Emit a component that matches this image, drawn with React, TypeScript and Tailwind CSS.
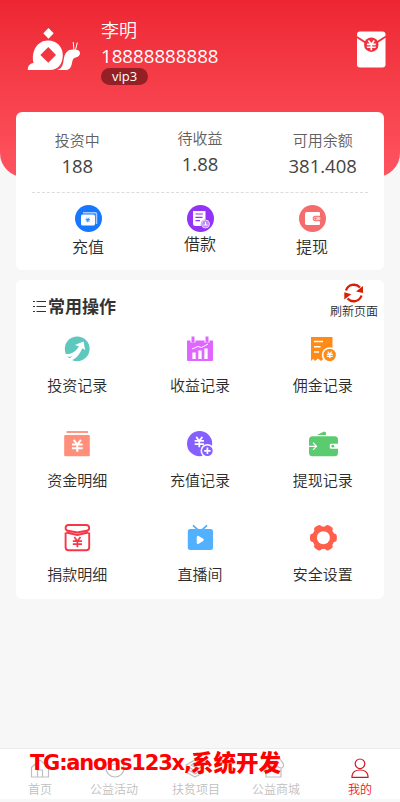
import type { ReactNode } from "react";

type Item = {
  label: string;
  icon: ReactNode;
};

function Yen({ x, y, s = 1 }: { x: number; y: number; s?: number }) {
  return (
    <path
      transform={`translate(${x} ${y}) scale(${s})`}
      d="M-3-5 0-1 3-5M-4.5-1h9M-4.5 2h9M0-1v6"
      fill="none"
      stroke="currentColor"
      strokeWidth="1.7"
    />
  );
}

function Snail() {
  return (
    <svg width="54" height="44" viewBox="27 27 54 44" fill="#fff">
      <path d="m48.500 28 5.200 5.300-5.200 5.400-5.200-5.400z" />
      <path
        fillRule="evenodd"
        d="M27.800 70c0-4.200 1.800-6.300 5.700-7C31 51.500 37 40.500 48 40.500c9 0 14.800 6.500 14.800 14.500 0 8.500-4.300 15-12.800 15zM48.300 47l-7.900 8 7.900 7.700 7.700-7.700z"
      />
      <path d="M57 70c5.500-1.500 6-5.500 6.700-10.500 1-7 4-10 9.300-10 4.500 0 7 1 7 3.500 0 2.900-2.300 4-5 4.800-2.300.7-2.500 2.700-3 5.200-.9 4.500-2.500 7-6.500 7z" />
      <path d="m74 50-.8-8M75.500 50l1.800-7.500" stroke="#fff" strokeWidth="1" />
    </svg>
  );
}

function RedEnvelope() {
  return (
    <svg width="30" height="38" viewBox="0 0 30 38" className="text-white">
      <rect x="1" y=".5" width="28.500" height="36" rx="3" fill="#fff" />
      <path d="m0 5.500 9.500 6h11L30 5.500" fill="none" stroke="#f2303d" strokeWidth="1.900" />
      <circle cx="15.300" cy="13.700" r="7.200" fill="#f2303d" />
      <Yen x={15.3} y={14.3} s={0.98} />
    </svg>
  );
}

const stats = [
  { label: "投资中", value: "188" },
  { label: "待收益", value: "1.88" },
  { label: "可用余额", value: "381.408" },
];

const actions: Item[] = [
  {
    label: "充值",
    icon: (
      <svg width="27" height="27" viewBox="0 0 27 27">
        <circle cx="13.500" cy="13.500" r="13.500" fill="#1677ff" />
        <path d="M8 7.800h12.300q1.200 0 1.200 1.200v10" fill="none" stroke="#a9cdff" strokeWidth="1.500" />
        <rect x="6" y="9.500" width="14" height="11" rx="1.500" fill="#fff" />
        <g className="text-[#1677ff]">
          <Yen x={12.8} y={15} s={0.46} />
        </g>
      </svg>
    ),
  },
  {
    label: "借款",
    icon: (
      <svg width="27" height="27" viewBox="0 0 27 27">
        <circle cx="13.500" cy="13.500" r="13.500" fill="#9333f5" />
        <path d="M6 6h12.500v8.500a5 5 0 0 0-4.500 6.500H8.500Q6 21 6 18.500z" fill="#fff" />
        <path d="M8.500 9h7.500M8.500 12.300h7M8.500 15.600h4.500" stroke="#9333f5" strokeWidth="1.200" />
        <circle cx="18.500" cy="19" r="4" fill="#c18cfa" stroke="#e7d2ff" />
        <path d="M16.500 20h4M18.500 20v-3" stroke="#fff" />
      </svg>
    ),
  },
  {
    label: "提现",
    icon: (
      <svg width="27" height="27" viewBox="0 0 27 27">
        <circle cx="13.500" cy="13.500" r="13.500" fill="#f56c6c" />
        <path d="M7.700 7H20q1 0 1 1v2.700h-4.500a2.800 2.800 0 0 0 0 5.600H21V19q0 1-1 1H7.700Q6 20 6 18.300V8.700Q6 7 7.700 7z" fill="#fff" />
        <rect x="14.500" y="11.700" width="7" height="3.600" rx="1.800" fill="#fccaca" />
        <circle cx="16.500" cy="13.500" r="1.100" fill="#f56c6c" />
      </svg>
    ),
  },
];

const records: Item[] = [
  {
    label: "投资记录",
    icon: (
      <svg width="30" height="30" viewBox="0 0 30 30">
        <circle cx="15.200" cy="14.800" r="12.400" fill="#5cc8be" />
        <path
          d="M3.300 20c6 .8 11.500-3 13.500-7.700l-4-1.300 8.700-3.500 1.700 8.500-3-1.700C18 20 14.500 24.500 9.500 26.500L5.500 25q3.500-1 5-2.800-3.500 1-6.200.3z"
          fill="#fff"
        />
      </svg>
    ),
  },
  {
    label: "收益记录",
    icon: (
      <svg width="30" height="30" viewBox="0 0 30 30">
        <path d="M2 6.500h26V26q0 1-1 1H3q-1 0-1-1z" fill="#df66ff" />
        <path d="M8 2v6.500M22 2v6.500" stroke="#fff" strokeWidth="5" />
        <path d="M8 2.500v6M22 2.500v6" stroke="#df66ff" strokeWidth="3" />
        <path d="m7 15 6-2.500 3.500 1L23 10" fill="none" stroke="#fff" strokeWidth="1" />
        <path d="M9 25v-6.500M15 25v-8.500M21 25V14.500" stroke="#fff" strokeWidth="3.300" />
      </svg>
    ),
  },
  {
    label: "佣金记录",
    icon: (
      <svg width="30" height="30" viewBox="0 0 30 30">
        <path d="M3 3h21.500v23.500l-3-2-2.500 2.500-3-2.500-3 2.500-3-2.500L7 27l-2-2-2 2z" fill="#ff8b17" />
        <path d="M6 7.500h9M6 12.700h6.500M6 18h5" stroke="#fff" strokeWidth="1.500" />
        <circle cx="21.500" cy="21" r="7.700" fill="#fff" />
        <circle cx="21.700" cy="21" r="6.200" fill="#ff8b17" />
        <g className="text-white">
          <Yen x={21.8} y={21} s={0.67} />
        </g>
      </svg>
    ),
  },
  {
    label: "资金明细",
    icon: (
      <svg width="30" height="30" viewBox="0 0 30 30">
        <path d="M4.500 3h21.500" stroke="#ff8e7b" strokeWidth="1.800" />
        <rect x="2.200" y="6" width="25.600" height="21.300" rx="1" fill="#ff8e7b" />
        <g className="text-white">
          <Yen x={15.3} y={16.8} s={1.2} />
        </g>
      </svg>
    ),
  },
  {
    label: "充值记录",
    icon: (
      <svg width="30" height="30" viewBox="0 0 30 30">
        <circle cx="14.600" cy="14.700" r="12.600" fill="#855fff" />
        <g className="text-white">
          <Yen x={14.3} y={13} s={1.03} />
        </g>
        <circle cx="22.400" cy="21.800" r="6.900" fill="#fff" />
        <circle cx="22.400" cy="21.800" r="5.300" fill="#855fff" />
        <path d="M19.200 21.800h6.400M22.400 18.600v6.400" stroke="#fff" strokeWidth="1.700" />
      </svg>
    ),
  },
  {
    label: "提现记录",
    icon: (
      <svg width="30" height="30" viewBox="0 0 30 30">
        <path d="m9 6 7-3.500 2 1V6z" fill="#5bcb70" />
        <rect x="1" y="7.200" width="29" height="20" rx="3.500" fill="#5bcb70" />
        <path d="M1 17.300h7M5 13.700l3.500 3.600L5 20.900" fill="none" stroke="#fff" strokeWidth="1.200" />
        <path d="M30 14.800h-7q-1.200 0-1.200 1.200v2.500q0 1.200 1.200 1.200h7z" fill="#fff" />
        <circle cx="24.800" cy="17.200" r="1.400" fill="#5bcb70" />
      </svg>
    ),
  },
  {
    label: "捐款明细",
    icon: (
      <svg width="30" height="30" viewBox="0 0 30 30" className="text-[#f73748]">
        <path
          d="M6.500 2h17.500q3.200 0 3.200 3 0 2.300-2.500 2.700L15.300 9.500 6 7.700Q3.600 7.300 3.600 5q0-3 2.900-3zM4.300 9.500l11 2.500 11-2.500M3.600 9.500V24.200q0 3 3 3h17.600q3 0 3-3V9.500"
          fill="none"
          stroke="currentColor"
          strokeWidth="1.900"
        />
        <Yen x={15.4} y={19.2} s={1.02} />
      </svg>
    ),
  },
  {
    label: "直播间",
    icon: (
      <svg width="30" height="30" viewBox="0 0 30 30">
        <path d="m8.500 2.800 4.500 4M21.500 2.800l-4.500 4" stroke="#52b1ff" strokeWidth="1.800" strokeLinecap="round" />
        <rect x="2.800" y="6" width="25.200" height="21" rx="2.500" fill="#52b1ff" />
        <path d="m13 14 4.500 2.900L13 19.800z" fill="#fff" stroke="#fff" strokeWidth="2.500" strokeLinejoin="round" />
      </svg>
    ),
  },
  {
    label: "安全设置",
    icon: (
      <svg width="30" height="30" viewBox="0 0 30 30" fill="#ff5f4b">
        <circle cx="15.400" cy="14.700" r="11.300" />
        <rect x="2" y="10.500" width="26.800" height="8.400" rx="3" />
        <rect x="2" y="10.500" width="26.800" height="8.400" rx="3" transform="rotate(60 15.400 14.700)" />
        <rect x="2" y="10.500" width="26.800" height="8.400" rx="3" transform="rotate(120 15.400 14.700)" />
        <circle cx="15.400" cy="14.700" r="6.500" fill="#fff" />
      </svg>
    ),
  },
];

const tabs: (Item & { className: string })[] = [
  {
    label: "首页",
    className: "text-[#bfbfbf]",
    icon: <path d="M1.500 9.500 10 2l8.500 7.500V19h-17zM7.500 19v-7h5v7" />,
  },
  {
    label: "公益活动",
    className: "pr-3 text-[#bfbfbf]",
    icon: (
      <>
        <circle cx="11" cy="10" r="9" />
        <path d="M7 9q0-3 4-3t4 3v2q-4 3-8 0z" />
      </>
    ),
  },
  {
    label: "扶贫项目",
    className: "pr-2 text-[#bfbfbf]",
    icon: <path d="m0 7 9-5 9 5-9 6zM0 10.500l9 5.500 9-5.500M0 14l9 5 9-5M5 7l4-2 4 2-4 2z" />,
  },
  {
    label: "公益商城",
    className: "pr-2 text-[#bfbfbf]",
    icon: <path d="M0 10v9h15v-9M0 10Q-3 8 0 4l2-3h12l2 3q3.500 4-.5 6-3 0-4-2-1 2-3 2t-3-2q-1 2-5.500 2z" />,
  },
  {
    label: "我的",
    className: "text-[#f01421]",
    icon: (
      <g stroke="#cf1522" strokeWidth="1.200">
        <circle cx="10" cy="5.800" r="4.800" />
        <path d="M2 19.300v-1.500Q3 12 10 12t8 5.800v1.500z" />
      </g>
    ),
  },
];

export default function App() {
  return (
    <div className="flex h-[802px] w-[400px] flex-col bg-[#f7f7f7] font-['Open_Sans','Noto_Sans_CJK_SC',sans-serif] font-[350] text-[#2b2b2b]">
      <header className="flex h-[177px] shrink-0 items-start rounded-b-[24px] bg-linear-to-b from-[#ed2532] to-[#ff5360] pr-3.5 pl-[27px] text-white">
        <div className="pt-[27px]">
          <Snail />
        </div>
        <div className="ml-5 flex-1 pt-[17px]">
          <div className="text-lg leading-[26px]">李明</div>
          <div className="text-[18.700px] leading-[25px] font-normal">18888888888</div>
          <div className="h-[17px] w-[47px] rounded-full bg-[#942025] text-center text-[13px] leading-4 font-normal">
            vip3
          </div>
        </div>
        <div className="pt-[31px]">
          <RedEnvelope />
        </div>
      </header>

      <section className="relative mx-4 -mt-[65px] h-[158px] shrink-0 rounded-md bg-white">
        <div className="grid h-20 grid-cols-3 pt-[15px] text-center">
          {stats.map((s, i) => (
            <div key={s.label} className={i === 1 ? "" : "pt-0.5"}>
              <div className="text-[15px] leading-[22px] text-[#606060]">{s.label}</div>
              <div className="pt-px text-[18.500px] leading-7 font-normal text-[#444]">{s.value}</div>
            </div>
          ))}
        </div>
        <div className="mx-4 border-t border-dashed border-[#dcdcdc]" />
        <div className="mx-4 grid grid-cols-3 pt-3">
          {actions.map((a, i) => (
            <div key={a.label} className="flex flex-col items-center">
              {a.icon}
              <span className={i === 1 ? "text-base leading-6" : "pt-[3px] text-base leading-6"}>{a.label}</span>
            </div>
          ))}
        </div>
      </section>

      <section className="mx-4 mt-2.5 h-[319px] shrink-0 rounded-md bg-white">
        <div className="flex h-[54px] justify-between pr-1.5 pl-4">
          <div className="flex h-[54px] items-center gap-px">
            <svg width="15" height="14" viewBox="0 0 15 14" stroke="#333" strokeWidth="1.200">
              <path d="M1 1.500h2M4.500 1.500H14M1 6.500h2M4.500 6.500H14M1 11.500h2M4.500 11.500H14" />
            </svg>
            <h2 className="text-[17px] font-bold text-[#333]">常用操作</h2>
          </div>
          <div className="flex flex-col items-center pt-[3px] text-xs leading-[18px]">
            <svg width="20" height="20" viewBox="0 0 20 20" fill="none" stroke="#d81e06" strokeWidth="2.300">
              <path d="M2 7.500A8.300 8.300 0 0 1 16 4.500M17.500 12.500a8.300 8.300 0 0 1-14 3" />
              <path d="M19 3v7l-7-1.500zM.3 16.500V9.200l7 2z" fill="#d81e06" stroke="none" />
            </svg>
            刷新页面
          </div>
        </div>
        <div className="grid auto-rows-[94.500px] grid-cols-3">
          {records.map((r) => (
            <div key={r.label} className="flex flex-col items-center text-[15px] leading-6">
              {r.icon}
              <span className="pt-[9px]">{r.label}</span>
            </div>
          ))}
        </div>
      </section>

      <nav className="relative mt-auto mb-[3px] grid h-[51px] shrink-0 grid-cols-5 border-t border-[#ececec] bg-white">
        {tabs.map((t) => (
          <div key={t.label} className={`flex flex-col items-center pt-[9px] text-xs leading-[22px] ${t.className}`}>
            <svg width="22" height="21" viewBox="-1 0 22 21" fill="none" stroke="currentColor" strokeWidth="1.200">
              {t.icon}
            </svg>
            {t.label}
          </div>
        ))}
        <div className="absolute top-[3px] left-[30px] flex h-6 items-center font-['DejaVu_Sans','Noto_Sans_CJK_SC',sans-serif] font-bold whitespace-nowrap text-[#f00]">
          <span className="w-[161px] text-[21px] tracking-[-1.200px]">TG:anons123x,</span>
          <span className="text-[22.500px] font-black">系统开发</span>
        </div>
      </nav>
    </div>
  );
}
